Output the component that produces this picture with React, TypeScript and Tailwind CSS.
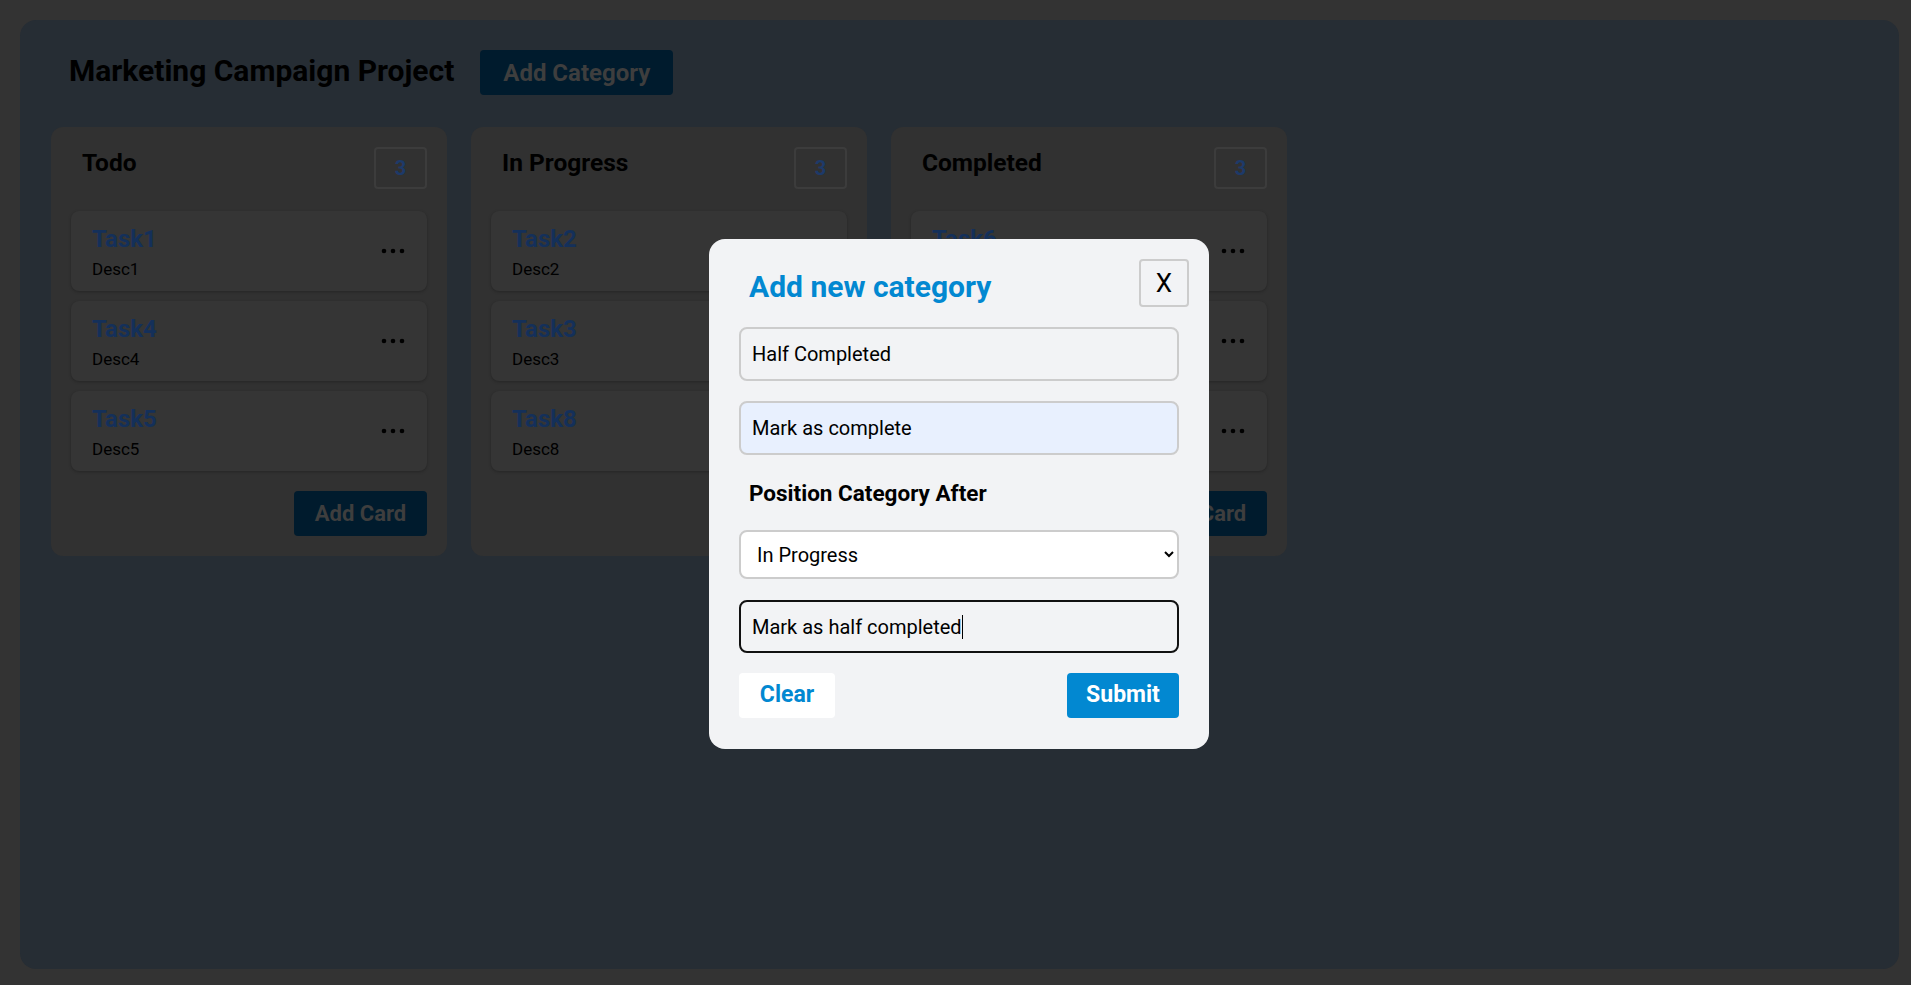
import { useEffect, useRef } from "react";

const columns = [
  { title: "Todo", tasks: [["Task1", "Desc1"], ["Task4", "Desc4"], ["Task5", "Desc5"]] },
  { title: "In Progress", tasks: [["Task2", "Desc2"], ["Task3", "Desc3"], ["Task8", "Desc8"]] },
  { title: "Completed", tasks: [["Task6", "Desc6"], ["Task7", "Desc7"], ["Task9", "Desc9"]] },
];

function Dots() {
  return (
    <svg width="24" height="6" viewBox="0 0 24 6" className="shrink-0">
      <circle cx="3" cy="3" r="2.3" fill="#000" />
      <circle cx="12" cy="3" r="2.3" fill="#000" />
      <circle cx="21" cy="3" r="2.3" fill="#000" />
    </svg>
  );
}

export default function App() {
  const lastRef = useRef<HTMLInputElement>(null);
  const lastValue = "Mark as half completed";

  useEffect(() => {
    const el = lastRef.current;
    if (el) {
      el.focus();
      el.setSelectionRange(el.value.length, el.value.length);
    }
  }, []);

  return (
    <div className="relative h-[985px] w-full overflow-hidden bg-[#333333] pt-5 pl-5 font-['Roboto',sans-serif]">
      {/* Board (dimmed behind the modal) */}
      <div className="h-[949px] w-[1879px] rounded-2xl bg-[#262d34]">
        <div className="flex items-center gap-[26px] pl-[49px] pt-[30px]">
          <h1 className="-mt-[4px] text-[30px] font-bold leading-9 text-black">Marketing Campaign Project</h1>
          <button className="h-[45px] w-[193px] rounded bg-[#001b2d] text-[24px] font-bold text-[#3e3e3e]">
            Add Category
          </button>
        </div>

        <div className="mt-8 flex items-start gap-6 pl-[31px]">
          {columns.map((col) => (
            <div key={col.title} className="flex w-[396px] flex-col rounded-xl bg-[#313131] p-5">
              <div className="flex items-start justify-between">
                <h2 className="pl-[11px] text-[24.5px] leading-8 font-bold text-black">{col.title}</h2>
                <div className="flex h-[42px] w-[53px] items-center justify-center rounded border-2 border-[#3c3c3c] text-[20px] font-bold text-[#1d3a6a]">
                  {col.tasks.length}
                </div>
              </div>

              <div className="mt-[22px] flex flex-col gap-[10px]">
                {col.tasks.map(([name, desc]) => (
                  <div
                    key={name}
                    className="flex h-[80px] items-center justify-between rounded-lg bg-[#353535] pr-[22px] pl-[21px] shadow-[0_1px_3px_rgba(0,0,0,0.25)]"
                  >
                    <div className="flex flex-col self-start pt-3">
                      <div className="text-2xl leading-8 font-bold text-[#14305a]">{name}</div>
                      <div className="mt-0.5 text-[17px] leading-6 text-black">{desc}</div>
                    </div>
                    <Dots />
                  </div>
                ))}
              </div>

              <button className="mt-5 h-[45px] w-[133px] self-end rounded bg-[#001b2d] text-[22px] font-bold text-[#3e3e3e]">
                Add Card
              </button>
            </div>
          ))}
        </div>
      </div>

      {/* Modal */}
      <div className="absolute top-[239px] left-[709px] flex h-[510px] w-[500px] flex-col rounded-2xl bg-[#f2f3f5] px-[30px] pt-5">
        <div className="flex h-[48px] items-start justify-between">
          <h3 className="mt-[10px] pl-[10px] text-[30px] leading-9 font-bold text-[#0288d1]">Add new category</h3>
          <button className="-mr-[10px] h-[48px] w-[50px] rounded border-2 border-[#cccccc] text-[26px] leading-none text-black">
            X
          </button>
        </div>

        <input
          defaultValue="Half Completed"
          className="mt-[20px] h-[54px] w-full rounded-lg border-2 border-[#cccccc] bg-transparent px-[11px] text-[20px] text-black outline-none"
        />
        <input
          defaultValue="Mark as complete"
          className="mt-[20px] h-[54px] w-full rounded-lg border-2 border-[#cccccc] bg-[#e8f0fe] px-[11px] text-[20px] text-black outline-none"
        />

        <div className="mt-[24px] pl-[10px] text-[22.5px] leading-7 font-bold text-black">Position Category After</div>

        <select
          defaultValue="In Progress"
          className="mt-[23px] h-[49px] w-full rounded-lg border-2 border-[#cccccc] bg-white pr-2 pl-3 text-[20px] text-black outline-none"
        >
          <option>Todo</option>
          <option>In Progress</option>
          <option>Completed</option>
        </select>

        <div className="relative mt-[21px] h-[53px] w-full">
          <input
            ref={lastRef}
            defaultValue={lastValue}
            className="h-full w-full rounded-lg border-2 border-[#111111] bg-transparent px-[11px] text-[20px] text-black caret-transparent outline-none"
          />
          {/* text caret */}
          <div className="pointer-events-none absolute inset-0 flex items-center px-[13px] text-[20px]">
            <span className="whitespace-pre text-transparent">{lastValue}</span>
            <span className="h-[24px] w-px bg-black" />
          </div>
        </div>

        <div className="mt-[20px] flex items-center justify-between">
          <button className="h-[45px] w-[96px] rounded bg-white text-[23px] font-bold text-[#0288d1]">Clear</button>
          <button className="h-[45px] w-[112px] rounded bg-[#0288d1] text-[23px] font-bold text-white">Submit</button>
        </div>
      </div>
    </div>
  );
}
